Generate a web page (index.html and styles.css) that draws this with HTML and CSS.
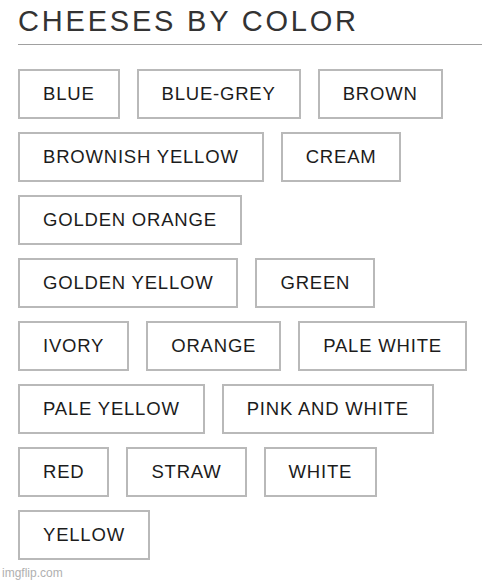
FILE: index.html
```html
<!DOCTYPE html>
<html lang="en">
<head>
<meta charset="utf-8">
<title>Cheeses by color</title>
<link rel="stylesheet" href="styles.css">
</head>
<body>
<main class="page">
  <h1 class="title">CHEESES BY COLOR</h1>
  <div class="tags">
    <span class="tag">BLUE</span>
    <span class="tag">BLUE-GREY</span>
    <span class="tag">BROWN</span>
    <span class="tag">BROWNISH YELLOW</span>
    <span class="tag">CREAM</span>
    <span class="tag">GOLDEN ORANGE</span>
    <span class="tag">GOLDEN YELLOW</span>
    <span class="tag">GREEN</span>
    <span class="tag">IVORY</span>
    <span class="tag">ORANGE</span>
    <span class="tag">PALE WHITE</span>
    <span class="tag">PALE YELLOW</span>
    <span class="tag">PINK AND WHITE</span>
    <span class="tag">RED</span>
    <span class="tag">STRAW</span>
    <span class="tag">WHITE</span>
    <span class="tag">YELLOW</span>
  </div>
</main>
<div class="watermark">imgflip.com</div>
</body>
</html>
```
FILE: styles.css
```css
html, body {
  margin: 0;
  padding: 0;
  background: #ffffff;
}
body {
  width: 500px;
  height: 582px;
  position: relative;
  overflow: hidden;
  font-family: "Liberation Sans", Arial, sans-serif;
}
.page {
  padding: 0 18px;
}
.title {
  margin: 0;
  padding-top: 4px;
  height: 45px;
  box-sizing: border-box;
  font-size: 29px;
  line-height: 34px;
  font-weight: 400;
  letter-spacing: 2.8px;
  color: #333333;
  border-bottom: 1px solid #a0a0a0;
}
.tags {
  display: flex;
  flex-wrap: wrap;
  gap: 13px 17px;
  max-width: 450px;
  margin-top: 24px;
}
.tag {
  display: flex;
  align-items: center;
  height: 50px;
  box-sizing: border-box;
  padding: 0 23px;
  border: 2px solid #b9b9b9;
  font-size: 18.5px;
  letter-spacing: 0.8px;
  color: #1c1c1c;
  white-space: nowrap;
}
.watermark {
  position: absolute;
  left: 2px;
  bottom: 2px;
  font-family: "Liberation Sans", Arial, sans-serif;
  font-size: 12px;
  color: #b0b0b0;
}
```
